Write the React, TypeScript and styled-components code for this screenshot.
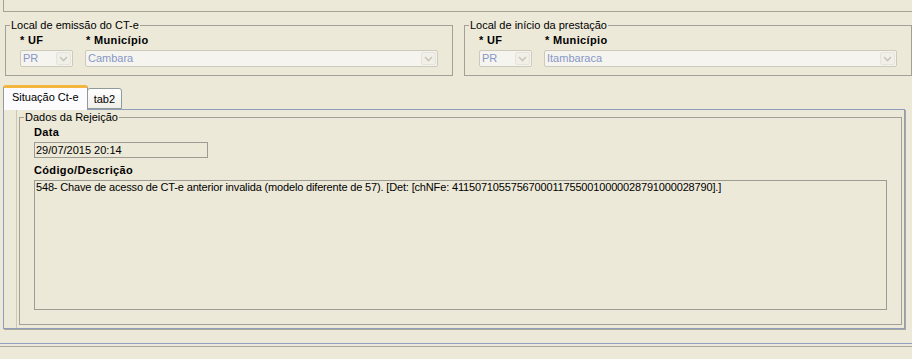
import React from 'react';
import styled, { createGlobalStyle } from 'styled-components';

const GlobalStyle = createGlobalStyle`
  html, body {
    margin: 0;
    padding: 0;
    background: #ece9d8;
  }
  body {
    font-family: "Liberation Sans", Arial, sans-serif;
    font-size: 11px;
    color: #000;
  }
`

const Page = styled.div`
  width: 912px;
  height: 359px;
  overflow: hidden;
  background: #ece9d8;
`
const TopBox = styled.div`
  margin-left: 3px;
  height: 11px;
  border-left: 1px solid #a5a296;
  border-bottom: 1px solid #a5a296;
`
const PlaceRow = styled.div`
  display: grid;
  grid-template-columns: 448px 448px;
  column-gap: 11px;
  padding-left: 5px;
  margin-top: 7px;
`
const Group = styled.fieldset`
  margin: 0;
  min-width: 0;
  border: 1px solid #a3a197;
  padding: 0 14px ${p => p.$bottom ?? 8}px 14px;
`
const Legend = styled.legend`
  margin-left: -10px;
  padding: 0 1px;
  font-size: 11px;
  line-height: 13px;
`
const ComboGrid = styled.div`
  display: grid;
  grid-template-columns: 53px 353px;
  column-gap: 12px;
  row-gap: 3px;
  margin-top: 2px;
`
const FieldLabel = styled.div`
  font-weight: bold;
  line-height: 13px;
  letter-spacing: 0.35px;
  padding-left: ${p => p.$indent ?? 0}px;
  margin-top: ${p => p.$top ?? 0}px;
`
const Combo = styled.div`
  display: flex;
  align-items: center;
  justify-content: space-between;
  height: 15px;
  border: 1px solid #cdcabb;
  border-radius: 2px;
  background: #f5f4ee;
  padding-left: 2px;
  color: #8797c8;
  line-height: 15px;
`
const ComboButton = styled.div`
  width: 15px;
  height: 13px;
  margin-right: 1px;
  display: flex;
  align-items: center;
  justify-content: center;
  background: #f1f0e8;
  border: 1px solid #e6e4da;
  border-radius: 2px;
  box-sizing: border-box;
`
const TabStrip = styled.div`
  display: flex;
  align-items: flex-end;
  margin: 9px 0 0 3px;
  height: 24px;
  position: relative;
  z-index: 1;
`
const Tab = styled.div`
  box-sizing: border-box;
  padding: 0 ${p => (p.$active ? 8 : 6)}px;
  height: ${p => (p.$active ? 25 : 21)}px;
  margin-bottom: ${p => (p.$active ? -1 : 0)}px;
  line-height: ${p => (p.$active ? 18 : 20)}px;
  border: 1px solid #919b9c;
  border-bottom: ${p => (p.$active ? 'none' : '1px solid #919b9c')};
  border-top: ${p => (p.$active ? '3px solid #f3b63e' : '1px solid #919b9c')};
  border-radius: 3px 3px 0 0;
  background: ${p => (p.$active ? '#fcfcfe' : 'linear-gradient(#ffffff, #f0efe8)')};
  margin-left: ${p => (p.$active ? 0 : -1)}px;
  white-space: nowrap;
`
const TabPanel = styled.div`
  margin-left: 3px;
  width: 900px;
  height: 218px;
  border: 1px solid #8f9cbb;
  box-shadow: 1px 1px 0 #aca899;
  display: flex;
`
const PanelInner = styled.div`
  flex: 1;
  margin-left: 12px;
  border-left: 1px solid #cbc8b7;
  padding: 1px 2px 3px 2px;
  display: flex;
  flex-direction: column;
`
const DateBox = styled.div`
  width: 171px;
  height: 14px;
  border: 1px solid #9c9b94;
  padding-left: 1px;
  line-height: 14px;
  margin-top: 3px;
`
const TextArea = styled.div`
  height: 128px;
  border: 1px solid #9c9b94;
  padding: 0 1px;
  line-height: 13px;
  letter-spacing: -0.16px;
  margin-top: 3px;
  white-space: nowrap;
`
const StatusLines = styled.div`
  margin-top: 14px;
  height: 2px;
  border-top: 1px solid #93a2c2;
  border-bottom: 1px solid #a9a89f;
`

function Chevron() {
  return (
    <svg width="9" height="6" viewBox="0 0 9 6">
      <path d="M1 1 L4.5 4.5 L8 1" fill="none" stroke="#c9c7b8" strokeWidth="1.6" />
    </svg>
  );
}

function ComboBox({ value }: { value: string }) {
  return (
    <Combo>
      <span>{value}</span>
      <ComboButton><Chevron /></ComboButton>
    </Combo>
  );
}

function PlaceGroup({ title, city }: { title: string; city: string }) {
  return (
    <Group>
      <Legend>{title}</Legend>
      <ComboGrid>
        <FieldLabel>* UF</FieldLabel>
        <FieldLabel $indent={1}>* Município</FieldLabel>
        <ComboBox value="PR" />
        <ComboBox value={city} />
      </ComboGrid>
    </Group>
  );
}

export default function App() {
  return (
    <Page>
      <GlobalStyle />
      <TopBox />
      <PlaceRow>
        <PlaceGroup title="Local de emissão do CT-e" city="Cambara" />
        <PlaceGroup title="Local de início da prestação" city="Itambaraca" />
      </PlaceRow>
      <TabStrip>
        <Tab $active>Situação Ct-e</Tab>
        <Tab>tab2</Tab>
      </TabStrip>
      <TabPanel>
        <PanelInner>
          <Group $bottom={14}>
            <Legend>Dados da Rejeição</Legend>
            <FieldLabel $top={2}>Data</FieldLabel>
            <DateBox>29/07/2015 20:14</DateBox>
            <FieldLabel $top={6}>Código/Descrição</FieldLabel>
            <TextArea>
              548- Chave de acesso de CT-e anterior invalida (modelo diferente de 57). [Det: [chNFe: 41150710557567000117550010000028791000028790].]
            </TextArea>
          </Group>
        </PanelInner>
      </TabPanel>
      <StatusLines />
    </Page>
  );
}
